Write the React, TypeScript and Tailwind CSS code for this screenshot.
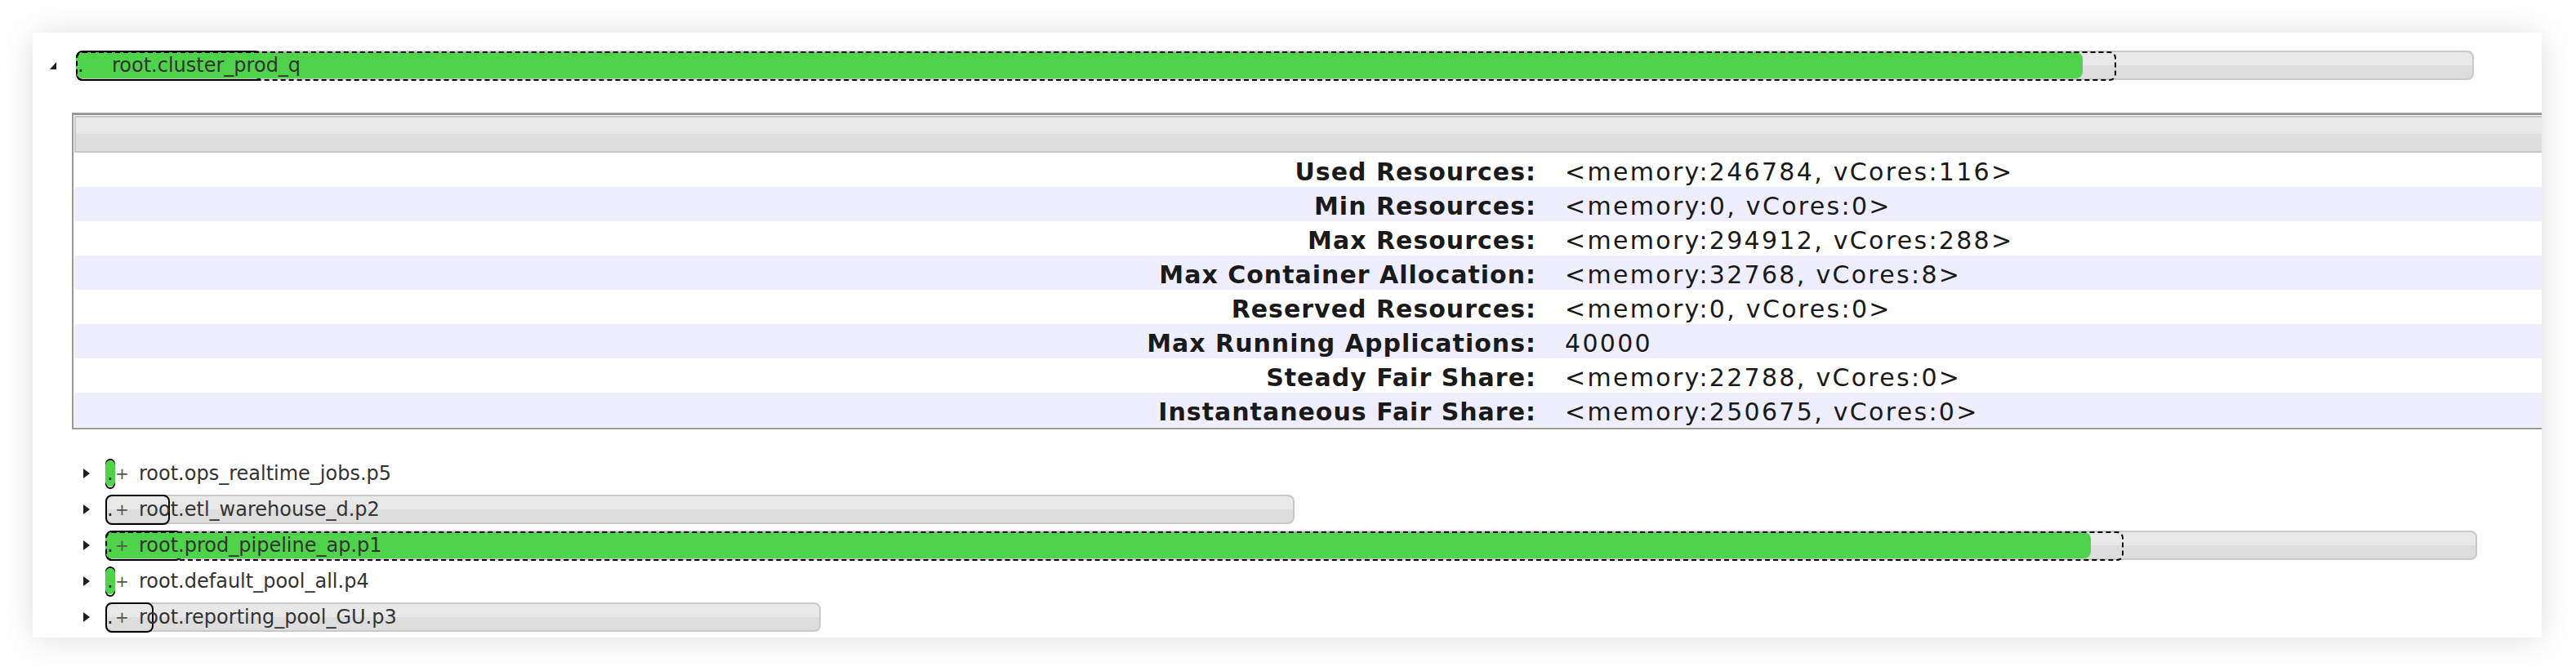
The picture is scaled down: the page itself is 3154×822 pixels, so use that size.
import React from 'react'

type Queue = {
  name: string
  suffix: string
  max: number
  used: number
  fair: number
  steady: number
}

const children: Queue[] = [
  { name: 'root.ops_realtime_jobs', suffix: '.p5', max: 12, used: 12, fair: 0, steady: 12 },
  { name: 'root.etl_warehouse_d', suffix: '.p2', max: 1456, used: 0, fair: 0, steady: 79 },
  { name: 'root.prod_pipeline_ap', suffix: '.p1', max: 2904, used: 2431, fair: 2471, steady: 94 },
  { name: 'root.default_pool_all', suffix: '.p4', max: 12, used: 12, fair: 0, steady: 12 },
  { name: 'root.reporting_pool_GU', suffix: '.p3', max: 876, used: 0, fair: 0, steady: 59 },
]

const stats: [string, string][] = [
  ['Used Resources:', '<memory:246784, vCores:116>'],
  ['Min Resources:', '<memory:0, vCores:0>'],
  ['Max Resources:', '<memory:294912, vCores:288>'],
  ['Max Container Allocation:', '<memory:32768, vCores:8>'],
  ['Reserved Resources:', '<memory:0, vCores:0>'],
  ['Max Running Applications:', '40000'],
  ['Steady Fair Share:', '<memory:22788, vCores:0>'],
  ['Instantaneous Fair Share:', '<memory:250675, vCores:0>'],
]

function Bar({ q, root }: { q: Queue; root?: boolean }) {
  return (
    <div className="relative h-[36px] shrink-0" style={{ width: q.max }}>
      {/* max capacity */}
      {q.max > 20 && (
        <div className="absolute inset-0 rounded-[8px] border-2 border-[#c9c9c9] bg-linear-to-b from-[#e8e8e8] from-50% to-[#dddddd] to-50%" />
      )}
      {/* steady fair share */}
      <div
        className="absolute left-0 top-0 h-[37px] rounded-[8px] border-2 border-black"
        style={{ width: q.steady }}
      />
      {/* used */}
      {q.used > 0 && (
        <div
          className="absolute left-0 top-[2px] h-[32px] rounded-[8px] bg-[#4fd34a]"
          style={{ width: q.used }}
        />
      )}
      {/* instantaneous fair share */}
      {q.fair > 0 && (
        <div
          className="absolute left-0 top-[1px] h-[36px] rounded-[8px] border-2 border-dashed border-black"
          style={{ width: q.fair }}
        />
      )}
      <div className="absolute inset-y-0 left-0 flex items-center whitespace-nowrap text-[24px] text-[#333]">
        <span className="w-[12px] pl-[2px] text-[#222]">.</span>
        {root ? (
          <span className="pl-[32px]">{q.name}</span>
        ) : (
          <>
            <span className="w-[29px] text-[20px] text-[#555]">+</span>
            <span>
              {q.name}
              {q.suffix}
            </span>
          </>
        )}
      </div>
    </div>
  )
}

function Closed() {
  return (
    <svg width="8" height="12" viewBox="0 0 8 12" className="shrink-0">
      <polygon points="0,0 8,6 0,12" fill="#1f1f1f" />
    </svg>
  )
}

export default function App() {
  const root: Queue = { name: 'root.cluster_prod_q', suffix: '', max: 2936, used: 2457, fair: 2498, steady: 228 }

  return (
    <div className="h-[822px] w-[3154px] bg-white pl-[40px] pt-[40px] font-['DejaVu_Sans',sans-serif]">
      <div className="h-[741px] w-[3072px] overflow-hidden bg-white shadow-[0_2px_40px_rgba(0,0,0,0.13)]">
        {/* root queue */}
        <div className="flex h-[36px] items-center pl-[21px] mt-[22px]">
          <svg width="8" height="9" viewBox="0 0 8 9" className="mr-[24px] shrink-0">
            <polygon points="8,0 8,9 0,9" fill="#1f1f1f" />
          </svg>
          <Bar q={root} root />
        </div>

        {/* queue info table */}
        <div className="ml-[48px] mt-[40px] w-[3100px] border-2 border-t-[3px] border-[#999] bg-white p-[1px] text-[30px] text-[#1a1a1a]">
          <div className="h-[45px] border-2 border-[#c8c8c8] bg-linear-to-b from-[#e8e8e8] from-50% to-[#dedede] to-50%" />
          {stats.map(([label, value], i) => (
            <div
              key={label}
              className={`flex h-[42px] items-center pt-[5px] ${i % 2 === 1 ? 'bg-[#eeeeff]' : 'bg-white'}`}
            >
              <div className="w-[1807px] shrink-0 pr-[17px] text-right font-bold tracking-[1px]">{label}</div>
              <div className="pl-[18px] whitespace-nowrap tracking-[2.3px]">{value}</div>
            </div>
          ))}
        </div>

        {/* child queues */}
        <div className="mt-[32px]">
          {children.map((q) => (
            <div key={q.suffix} className="flex h-[44px] items-center pl-[62px]">
              <Closed />
              <div className="w-[19px] shrink-0" />
              <Bar q={q} />
            </div>
          ))}
        </div>
      </div>
    </div>
  )
}
